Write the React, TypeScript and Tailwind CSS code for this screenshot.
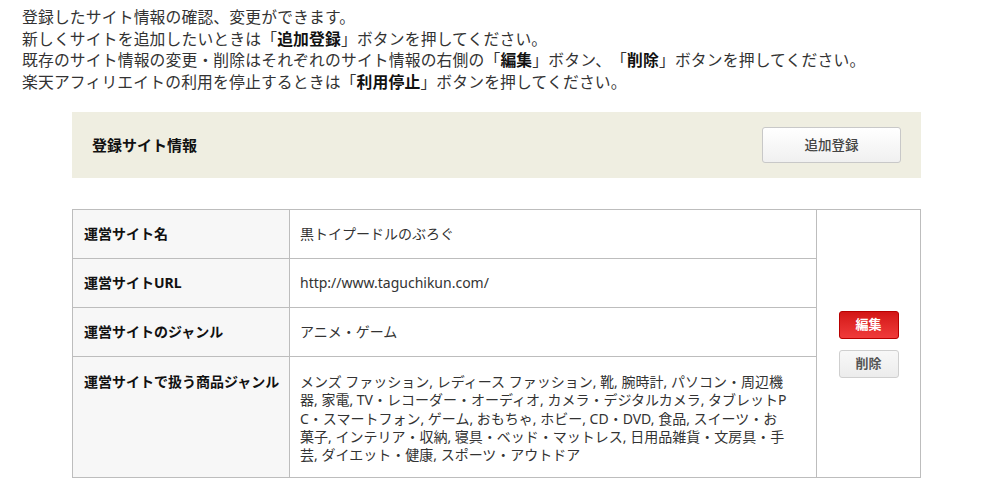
const font = { fontFamily: '"Noto Sans", "Noto Sans CJK JP", sans-serif' };

const genreLines = [
  'メンズ ファッション, レディース ファッション, 靴, 腕時計, パソコン・周辺機',
  '器, 家電, TV・レコーダー・オーディオ, カメラ・デジタルカメラ, タブレットP',
  'C・スマートフォン, ゲーム, おもちゃ, ホビー, CD・DVD, 食品, スイーツ・お',
  '菓子, インテリア・収納, 寝具・ベッド・マットレス, 日用品雑貨・文房具・手',
  '芸, ダイエット・健康, スポーツ・アウトドア',
];

const rows = [
  { label: '運営サイト名', value: '黒トイプードルのぶろぐ' },
  { label: '運営サイトURL', value: 'http://www.taguchikun.com/' },
  { label: '運営サイトのジャンル', value: 'アニメ・ゲーム' },
];

export default function App() {
  return (
    <div
      className="w-[982px] h-[502px] bg-white text-[#333] overflow-hidden [text-spacing-trim:space-all]"
      style={font}
    >
      {/* Intro */}
      <div className="pt-[7px] pl-[22px] text-[15.8px] leading-[21.5px] tracking-[0.15px]">
        <p>登録したサイト情報の確認、変更ができます。</p>
        <p>
          新しくサイトを追加したいときは「<b className="font-bold text-[#111]">追加登録</b>」ボタンを押してください。
        </p>
        <p>
          既存のサイト情報の変更・削除はそれぞれのサイト情報の右側の「<b className="font-bold text-[#111]">編集</b>」ボタン、「<b className="font-bold text-[#111]">削除</b>」ボタンを押してください。
        </p>
        <p>
          楽天アフィリエイトの利用を停止するときは「<b className="font-bold text-[#111]">利用停止</b>」ボタンを押してください。
        </p>
      </div>

      {/* Header panel */}
      <div className="mt-[19px] ml-[72px] w-[849px] h-[66px] bg-[#efeee1] flex items-center justify-between pl-[20px] pr-[20px]">
        <h2 className="text-[15px] font-bold text-[#111]">登録サイト情報</h2>
        <button className="w-[139px] h-[36px] rounded-[3px] border border-[#c8c8c8] bg-gradient-to-b from-white to-[#f0f0f0] text-[13.5px] text-[#444] font-medium">
          追加登録
        </button>
      </div>

      {/* Site table */}
      <table className="mt-[31px] ml-[72px] w-[849px] border-collapse text-[14px]">
        <tbody>
          {rows.map((r, i) => (
            <tr key={r.label}>
              <th className="w-[217px] h-[49px] bg-[#f7f7f7] border border-[#bdbdbd] text-left align-top font-bold text-[#111] pl-[11px] pr-[4px] pt-[13px] whitespace-nowrap">
                {r.label}
              </th>
              <td className="w-[527px] h-[49px] border border-[#bdbdbd] align-top pl-[10px] pr-[10px] pt-[13px]">
                {r.value}
              </td>
              {i === 0 && (
                <td rowSpan={4} className="border border-[#bdbdbd] align-middle">
                  <div className="flex flex-col items-center gap-[11px] pt-[1px]">
                    <button className="w-[60px] h-[28px] rounded-[3px] border border-[#b80000] bg-gradient-to-b from-[#d31515] to-[#f03a3a] text-white font-bold text-[13px]">
                      編集
                    </button>
                    <button className="w-[60px] h-[28px] rounded-[3px] border border-[#cfcfcf] bg-gradient-to-b from-[#f8f8f8] to-[#ececec] text-[#555] font-bold text-[13px]">
                      削除
                    </button>
                  </div>
                </td>
              )}
            </tr>
          ))}
          <tr>
            <th className="bg-[#f7f7f7] border border-[#bdbdbd] text-left align-top font-bold text-[#111] pl-[11px] pr-[4px] pt-[14px] whitespace-nowrap">
              運営サイトで扱う商品ジャンル
            </th>
            <td className="border border-[#bdbdbd] align-top pl-[10px] pr-[10px] pt-[16px] pb-[13px] leading-[18.3px] whitespace-nowrap">
              {genreLines.map((l) => (
                <div key={l}>{l}</div>
              ))}
            </td>
          </tr>
        </tbody>
      </table>
    </div>
  );
}
